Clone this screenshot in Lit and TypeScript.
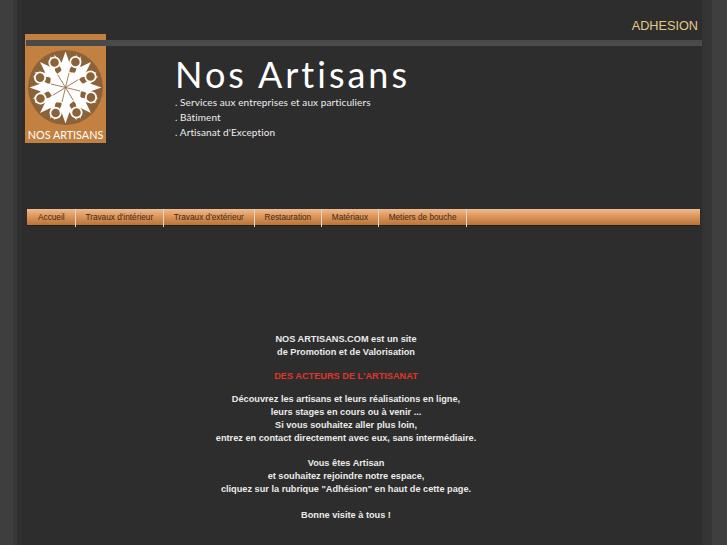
import { LitElement, html, css, svg } from "lit";
import { customElement } from "lit/decorators.js";

const NAV = ["Accueil", "Travaux d'intérieur", "Travaux d'extérieur", "Restauration", "Matériaux", "Metiers de bouche"];
const ANGLES = [0, 45, 90, 135, 180, 225, 270, 315];

@customElement("app-root")
export class AppRoot extends LitElement {
  static styles = css`
    :host {
      display: block;
      height: 545px;
      overflow: hidden;
      font-family: "Liberation Sans", Arial, sans-serif;
      background: linear-gradient(90deg, #3e3e3e 0, #3e3e3e 13px, #383838 13px, #383838 17px, #303030 17px, #303030 22px, transparent 22px, transparent 702px, #333 702px, #363636 712px, #3f3f3f 712px);
    }
    .page { margin-left: 22px; width: 680px; height: 545px; background: #2d2d2d; display: flex; flex-direction: column; }
    .adhesion { height: 40px; box-sizing: border-box; padding: 18px 4px 0 0; text-align: right; font-size: 12.7px; line-height: 16px; color: #e2cb88; }
    .head { position: relative; height: 169px; }
    .rule { position: absolute; left: 4px; right: 0; top: 0; height: 6px; background: #4a4a4a; }
    .logo { position: absolute; left: 3px; top: -6px; width: 81px; height: 109px; background: #c28141; display: block; }
    .brand { position: absolute; left: 153px; top: 14px; color: #fff; font-family: "Lato", sans-serif; }
    .title { font-size: 36px; line-height: 41px; font-weight: 400; letter-spacing: 3px; }
    .tag { font-size: 10px; line-height: 15px; color: #eee; letter-spacing: 0.1px; }
    .nav { margin: 0 2px 0 5px; height: 16px; display: flex; background: linear-gradient(#eebb90, #d98f52 55%, #b8743a); border-bottom: 1px solid #26211c; font-size: 8.25px; color: #3f2a18; }
    .nav span { height: 18px; box-sizing: border-box; padding: 0 9.8px; line-height: 18px; border-right: 1px solid #e6d8c8; }
    .nav span:first-child { padding-left: 11px; padding-right: 10px; }
    .copy { margin-top: 107px; width: 648px; text-align: center; font-weight: 700; font-size: 9.2px; line-height: 13px; color: #eaeaea; }
    .copy p { margin: 0; }
    .gap-11 { margin-top: 11px !important; }
    .gap-10 { margin-top: 10px !important; }
    .gap-12 { margin-top: 12px !important; }
    .gap-13 { margin-top: 13px !important; }
    .red { color: #e0352b; }
  `;

  private unit() {
    return ANGLES.map((a) => svg`<g transform="rotate(${a} 40.5 53.5)">
      <path d="M40.5 17.500L44.500 29 44.500 41 40.5 50 36.500 41 36.500 29Z" fill="#fff"/>
      <path d="M44 29L52 20.500 48 30 44 36Z" fill="#fff"/>
      <path d="M37 29L29 20.500 33 30 37 36Z" fill="#fff"/>
      <path d="M43 38L52 39 58 36 55 41 47 46 42 45Z" fill="#fff"/>
    </g>`);
  }

  private rings() {
    return ANGLES.map((a) => svg`<g transform="rotate(${a} 40.5 53.5)">
      <circle cx="29.5" cy="28.500" r="5.2" fill="#8c6238" stroke="#fff" stroke-width="1.8"/>
      <path d="M40.5 53.500L44 39" stroke="#8c6238" stroke-width="0.8" fill="none"/>
    </g>`);
  }

  render() {
    return html`<div class="page">
      <div class="adhesion">ADHESION</div>
      <div class="head">
        <svg class="logo" viewBox="0 0 81 109">
          <circle cx="40.5" cy="53.5" r="37.5" fill="#8c6238"/>
          <circle cx="40.5" cy="53.5" r="13" fill="#fff"/>
          ${this.unit()}
          ${this.rings()}
          <text x="40.5" y="104.500" text-anchor="middle" font-family="Lato, sans-serif" font-size="10.8" fill="#fff">NOS ARTISANS</text>
        </svg>
        <div class="rule"></div>
        <div class="brand">
          <div class="title">Nos Artisans</div>
          <div class="tag">. Services aux entreprises et aux particuliers</div>
          <div class="tag">. Bâtiment</div>
          <div class="tag">. Artisanat d'Exception</div>
        </div>
      </div>
      <div class="nav">${NAV.map((n) => html`<span>${n}</span>`)}</div>
      <div class="copy">
        <p>NOS ARTISANS.COM est un site<br />de Promotion et de Valorisation</p>
        <p class="red gap-11">DES ACTEURS DE L'ARTISANAT</p>
        <p class="gap-10">Découvrez les artisans et leurs réalisations en ligne,<br />leurs stages en cours ou à venir ...<br />Si vous souhaitez aller plus loin,<br />entrez en contact directement avec eux, sans intermédiaire.</p>
        <p class="gap-12">Vous êtes Artisan<br />et souhaitez rejoindre notre espace,<br />cliquez sur la rubrique "Adhésion" en haut de cette page.</p>
        <p class="gap-13">Bonne visite à tous !</p>
      </div>
    </div>`;
  }
}
